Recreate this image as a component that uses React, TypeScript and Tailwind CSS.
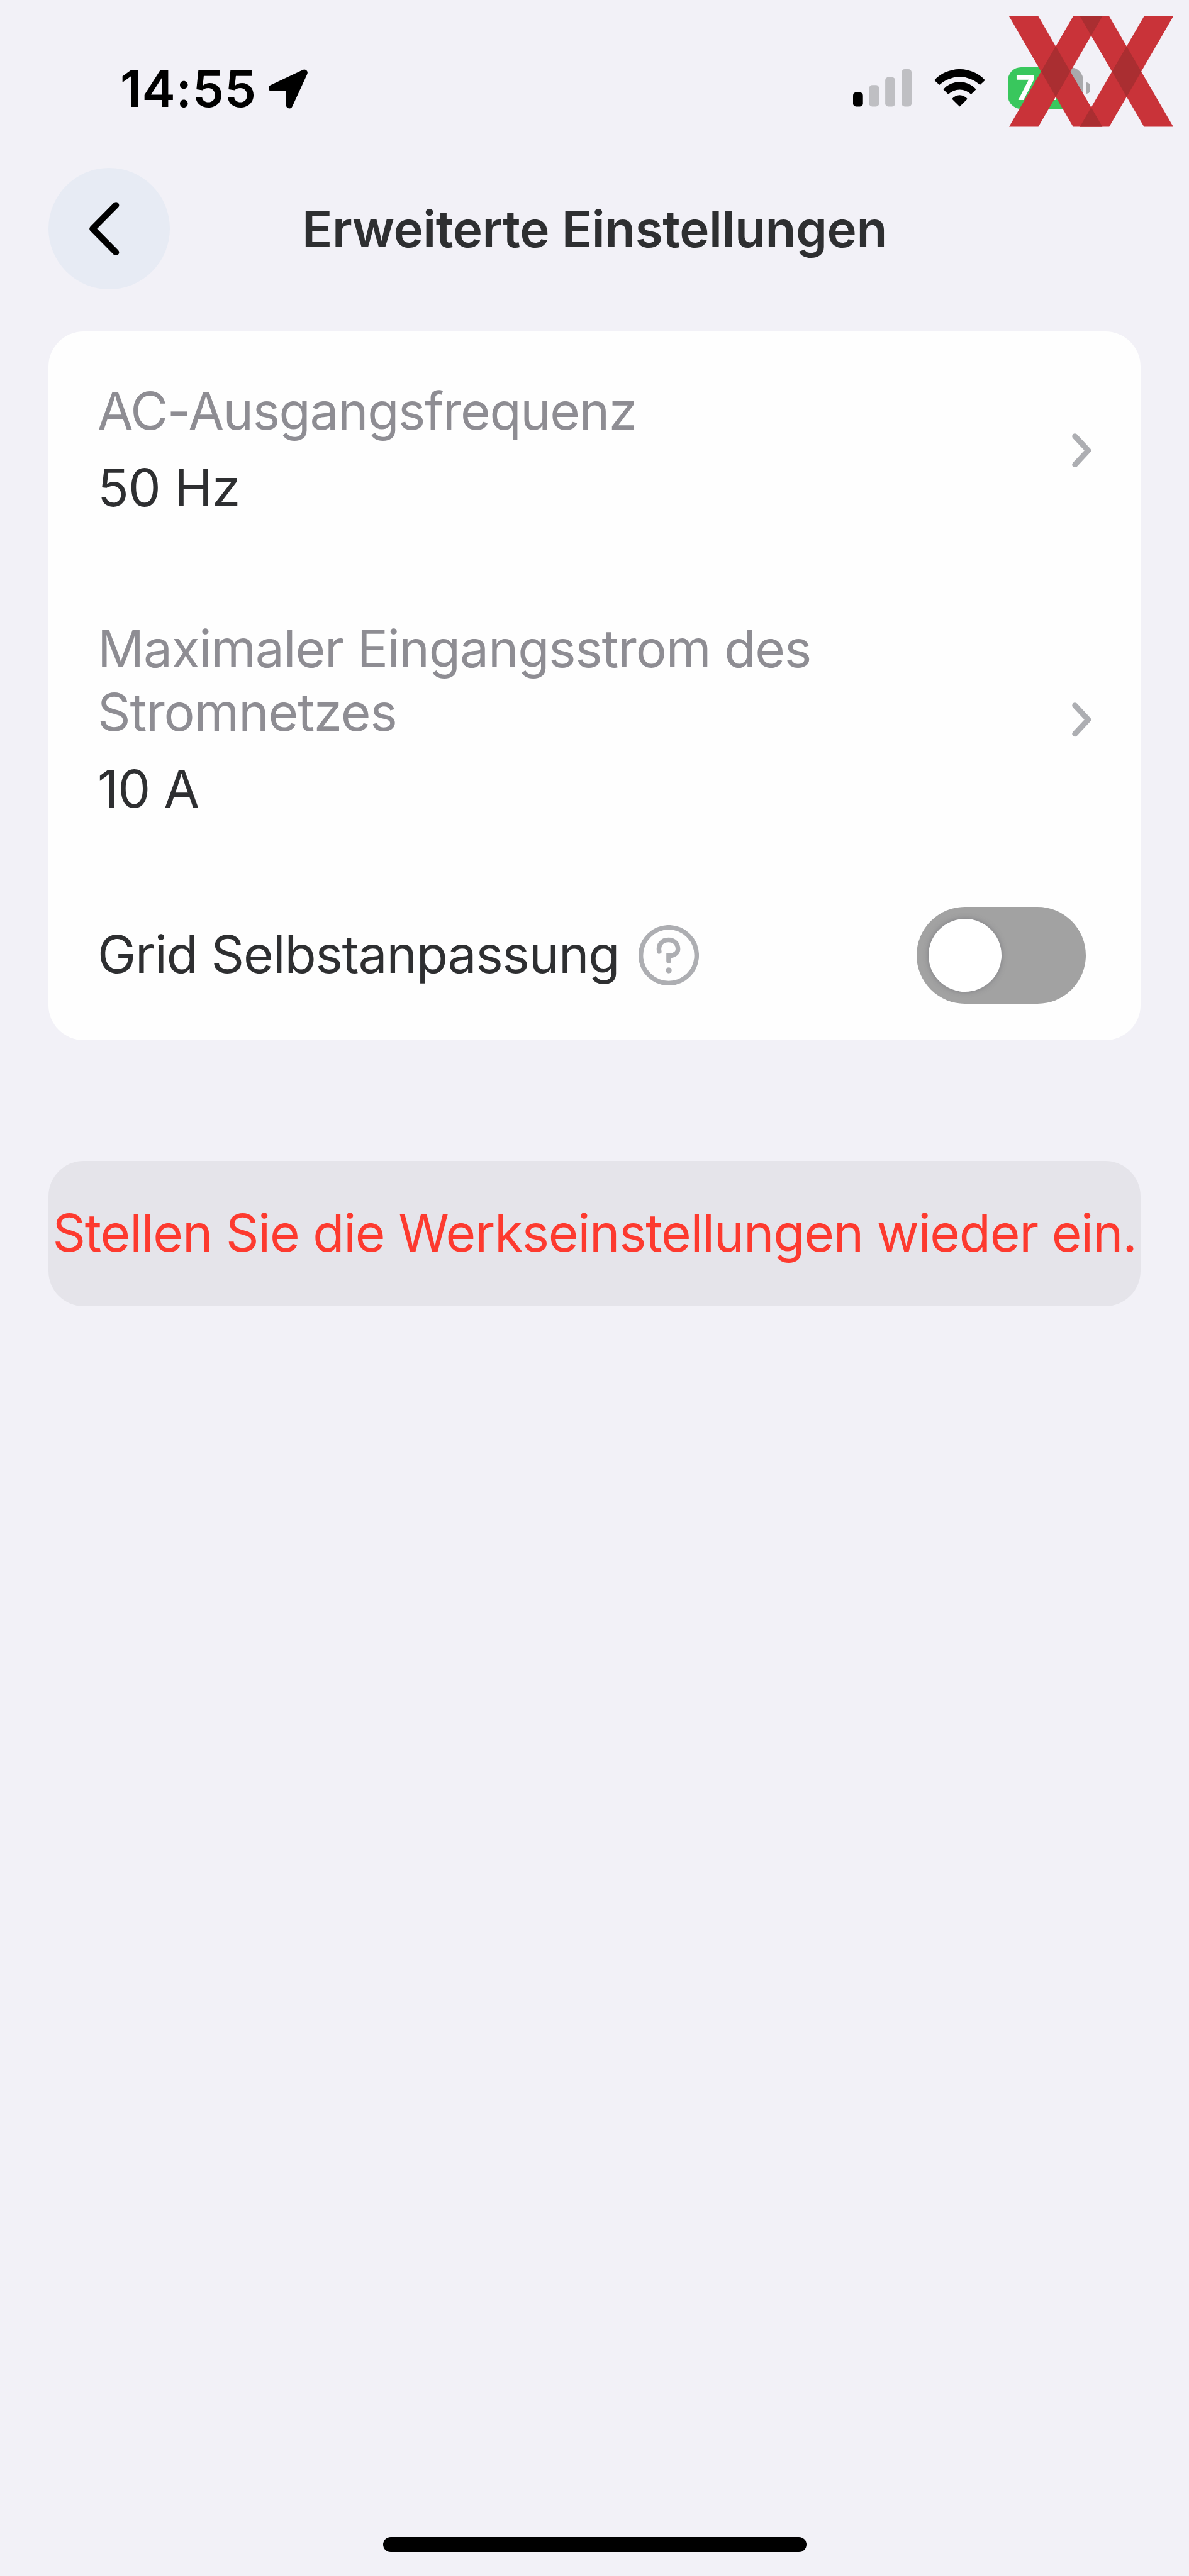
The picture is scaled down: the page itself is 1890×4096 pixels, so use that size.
const SIGNAL_BARS = [
  { x: 0, height: 23, color: '#000' },
  { x: 26, height: 34.8, color: '#bfbfc3' },
  { x: 52, height: 47.4, color: '#bfbfc3' },
  { x: 78.6, height: 60.4, color: '#bfbfc3' },
]

const SETTINGS = [
  { label: 'AC-Ausgangsfrequenz', value: '50 Hz', tracking: 'tracking-[-1.4px]' },
  { label: 'Maximaler Eingangsstrom des Stromnetzes', value: '10 A', tracking: 'tracking-[-1.15px]' },
]

function LocationArrow() {
  return (
    <svg viewBox="0 0 190 191" className="ml-[19px] h-[63px] w-[62px]" aria-hidden="true">
      <path
        d="M174 16 15 91H101V175Z"
        fill="#000"
        stroke="#000"
        strokeWidth="31"
        strokeLinejoin="round"
      />
    </svg>
  )
}

function Signal() {
  return (
    <svg viewBox="0 0 94.6 60.4" className="h-[59.5px] w-[93px]" aria-hidden="true">
      {SIGNAL_BARS.map((bar) => (
        <rect
          key={bar.x}
          x={bar.x}
          y={60.4 - bar.height}
          width="16"
          height={bar.height}
          rx="5"
          fill={bar.color}
        />
      ))}
    </svg>
  )
}

function Wifi() {
  return (
    <svg viewBox="0 0 82 60.4" className="h-[59.5px] w-[81px]" aria-hidden="true">
      <path d="M0 17.7A56.3 56.3 0 0 1 82 17.7L73.8 25.5A47.9 47.9 0 0 0 8.2 25.5Z" />
      <path d="M14.5 32.5A35.3 35.3 0 0 1 67.5 32.5L59.4 40.7A25.8 25.8 0 0 0 22.6 40.7Z" />
      <path d="M28.5 48A16 16 0 0 1 53.5 48L41 60.4Z" />
    </svg>
  )
}

function Battery() {
  return (
    <div className="flex items-center">
      <div className="flex h-[66px] w-[120px] items-center rounded-[21px] bg-[linear-gradient(90deg,#39c75d_73%,#a9a9ac_73%)] pl-[12px]">
        <span className="text-[54px] leading-none font-bold tracking-[2px] text-white">72</span>
      </div>
      <div className="ml-[5px] h-[18px] w-[6px] rounded-r-full bg-[#a9a9ac]" />
    </div>
  )
}

function Watermark() {
  return (
    <svg
      viewBox="0 0 718 535"
      preserveAspectRatio="none"
      className="absolute top-[26px] left-[1604px] h-[175.5px] w-[261px]"
      aria-hidden="true"
    >
      <g fill="#c93339">
        <path d="M0 0H128L408 535H280Z" />
        <path d="M280 0H408L128 535H0Z" />
        <path d="M310 0H438L718 535H590Z" />
        <path d="M590 0H718L438 535H310Z" />
      </g>
      <g fill="#aa2e31">
        <path d="M204 145 268 267.5 204 390 140 267.5Z" />
        <path d="M514 145 578 267.5 514 390 450 267.5Z" />
        <path d="M310 0H408L359 93.6Z" />
        <path d="M310 535H408L359 441.4Z" />
      </g>
    </svg>
  )
}

function ChevronRight() {
  return (
    <svg
      viewBox="0 0 31 55.5"
      className="mt-[3px] h-[54.5px] w-[30.5px] shrink-0"
      fill="none"
      stroke="#adaeb2"
      strokeWidth="9"
      strokeLinecap="round"
      strokeLinejoin="round"
      aria-hidden="true"
    >
      <path d="M4.7 4.7 26.2 27.8 4.7 50.8" />
    </svg>
  )
}

function HelpIcon() {
  return (
    <svg
      viewBox="0 0 97.4 97.4"
      className="ml-[31px] h-[96px] w-[96px]"
      fill="none"
      stroke="#adaeb2"
      strokeWidth="7.5"
      strokeLinecap="round"
      aria-hidden="true"
    >
      <circle cx="48.7" cy="48.7" r="45" />
      <path d="M33.4 42.5C31 31.5 38 23.9 48.3 23.9S63.6 31 63.6 38.5C63.6 44.5 58 49.5 48.6 49.5V58" />
      <circle cx="48.7" cy="73" r="4.8" fill="#adaeb2" stroke="none" />
    </svg>
  )
}

export default function App() {
  return (
    <div className="relative flex h-[4096px] w-[1890px] flex-col overflow-hidden bg-[#f2f1f7] font-[Inter,sans-serif] text-[#2e2f31]">
      {/* Status bar */}
      <div className="flex h-[267px] justify-between pt-[90px] pr-[157px] pl-[191px]">
        <div className="flex h-[102px] items-center text-black">
          <span className="text-[80px] font-semibold tracking-[0.7px]">14:55</span>
          <LocationArrow />
        </div>
        <div className="flex h-[100px] items-center gap-[36px]">
          <Signal />
          <Wifi />
          <Battery />
        </div>
      </div>

      {/* Header */}
      <header className="flex items-center px-[77px]">
        <button
          aria-label="Zurück"
          className="flex h-[193px] w-[193px] items-center justify-center rounded-full bg-[#e7ebf4] pr-[15px]"
        >
          <svg
            viewBox="0 0 145 261"
            className="h-[85.5px] w-[47.5px]"
            fill="none"
            stroke="#000"
            strokeWidth="31"
            strokeLinecap="round"
            strokeLinejoin="round"
          >
            <path d="M129 16 16 130.5 129 245" />
          </svg>
        </button>
        <h1 className="flex-1 text-center text-[80px] font-semibold tracking-[-0.47px]">
          Erweiterte Einstellungen
        </h1>
        <div className="w-[193px]" />
      </header>

      <main className="mt-[67px] px-[77px] text-[82px] leading-[101px]">
        <section className="rounded-[56px] bg-[#fefefe]">
          {SETTINGS.map((item) => (
            <div
              key={item.label}
              className="flex items-center justify-between pt-[76px] pr-[79px] pb-[79px] pl-[78px]"
            >
              <div className="w-[1300px]">
                <p className={`text-[#8e8d93] ${item.tracking}`}>{item.label}</p>
                <p className="mt-[21px] tracking-[-0.9px]">{item.value}</p>
              </div>
              <ChevronRight />
            </div>
          ))}

          <div className="flex items-center justify-between py-[58px] pr-[87px] pl-[78px]">
            <div className="flex items-center">
              <span className="pb-[4px] tracking-[-1.17px]">Grid Selbstanpassung</span>
              <HelpIcon />
            </div>
            <button
              role="switch"
              aria-checked="false"
              aria-label="Grid Selbstanpassung"
              className="flex h-[154px] w-[269px] items-center rounded-full bg-[#a2a2a2] pl-[19px]"
            >
              <span className="h-[116px] w-[116px] rounded-full bg-white shadow-[0_0_8px_rgba(90,90,100,0.5)]" />
            </button>
          </div>
        </section>

        <button className="mt-[192px] flex h-[231px] w-full items-center justify-center rounded-[56px] bg-[#e5e4ea] pb-[3px] tracking-[-1.25px] whitespace-nowrap text-[#fd3a2f]">
          Stellen Sie die Werkseinstellungen wieder ein.
        </button>
      </main>

      {/* Home indicator */}
      <div className="mx-auto mt-auto mb-[38px] h-[24px] w-[673px] rounded-full bg-black" />

      <Watermark />
    </div>
  )
}
